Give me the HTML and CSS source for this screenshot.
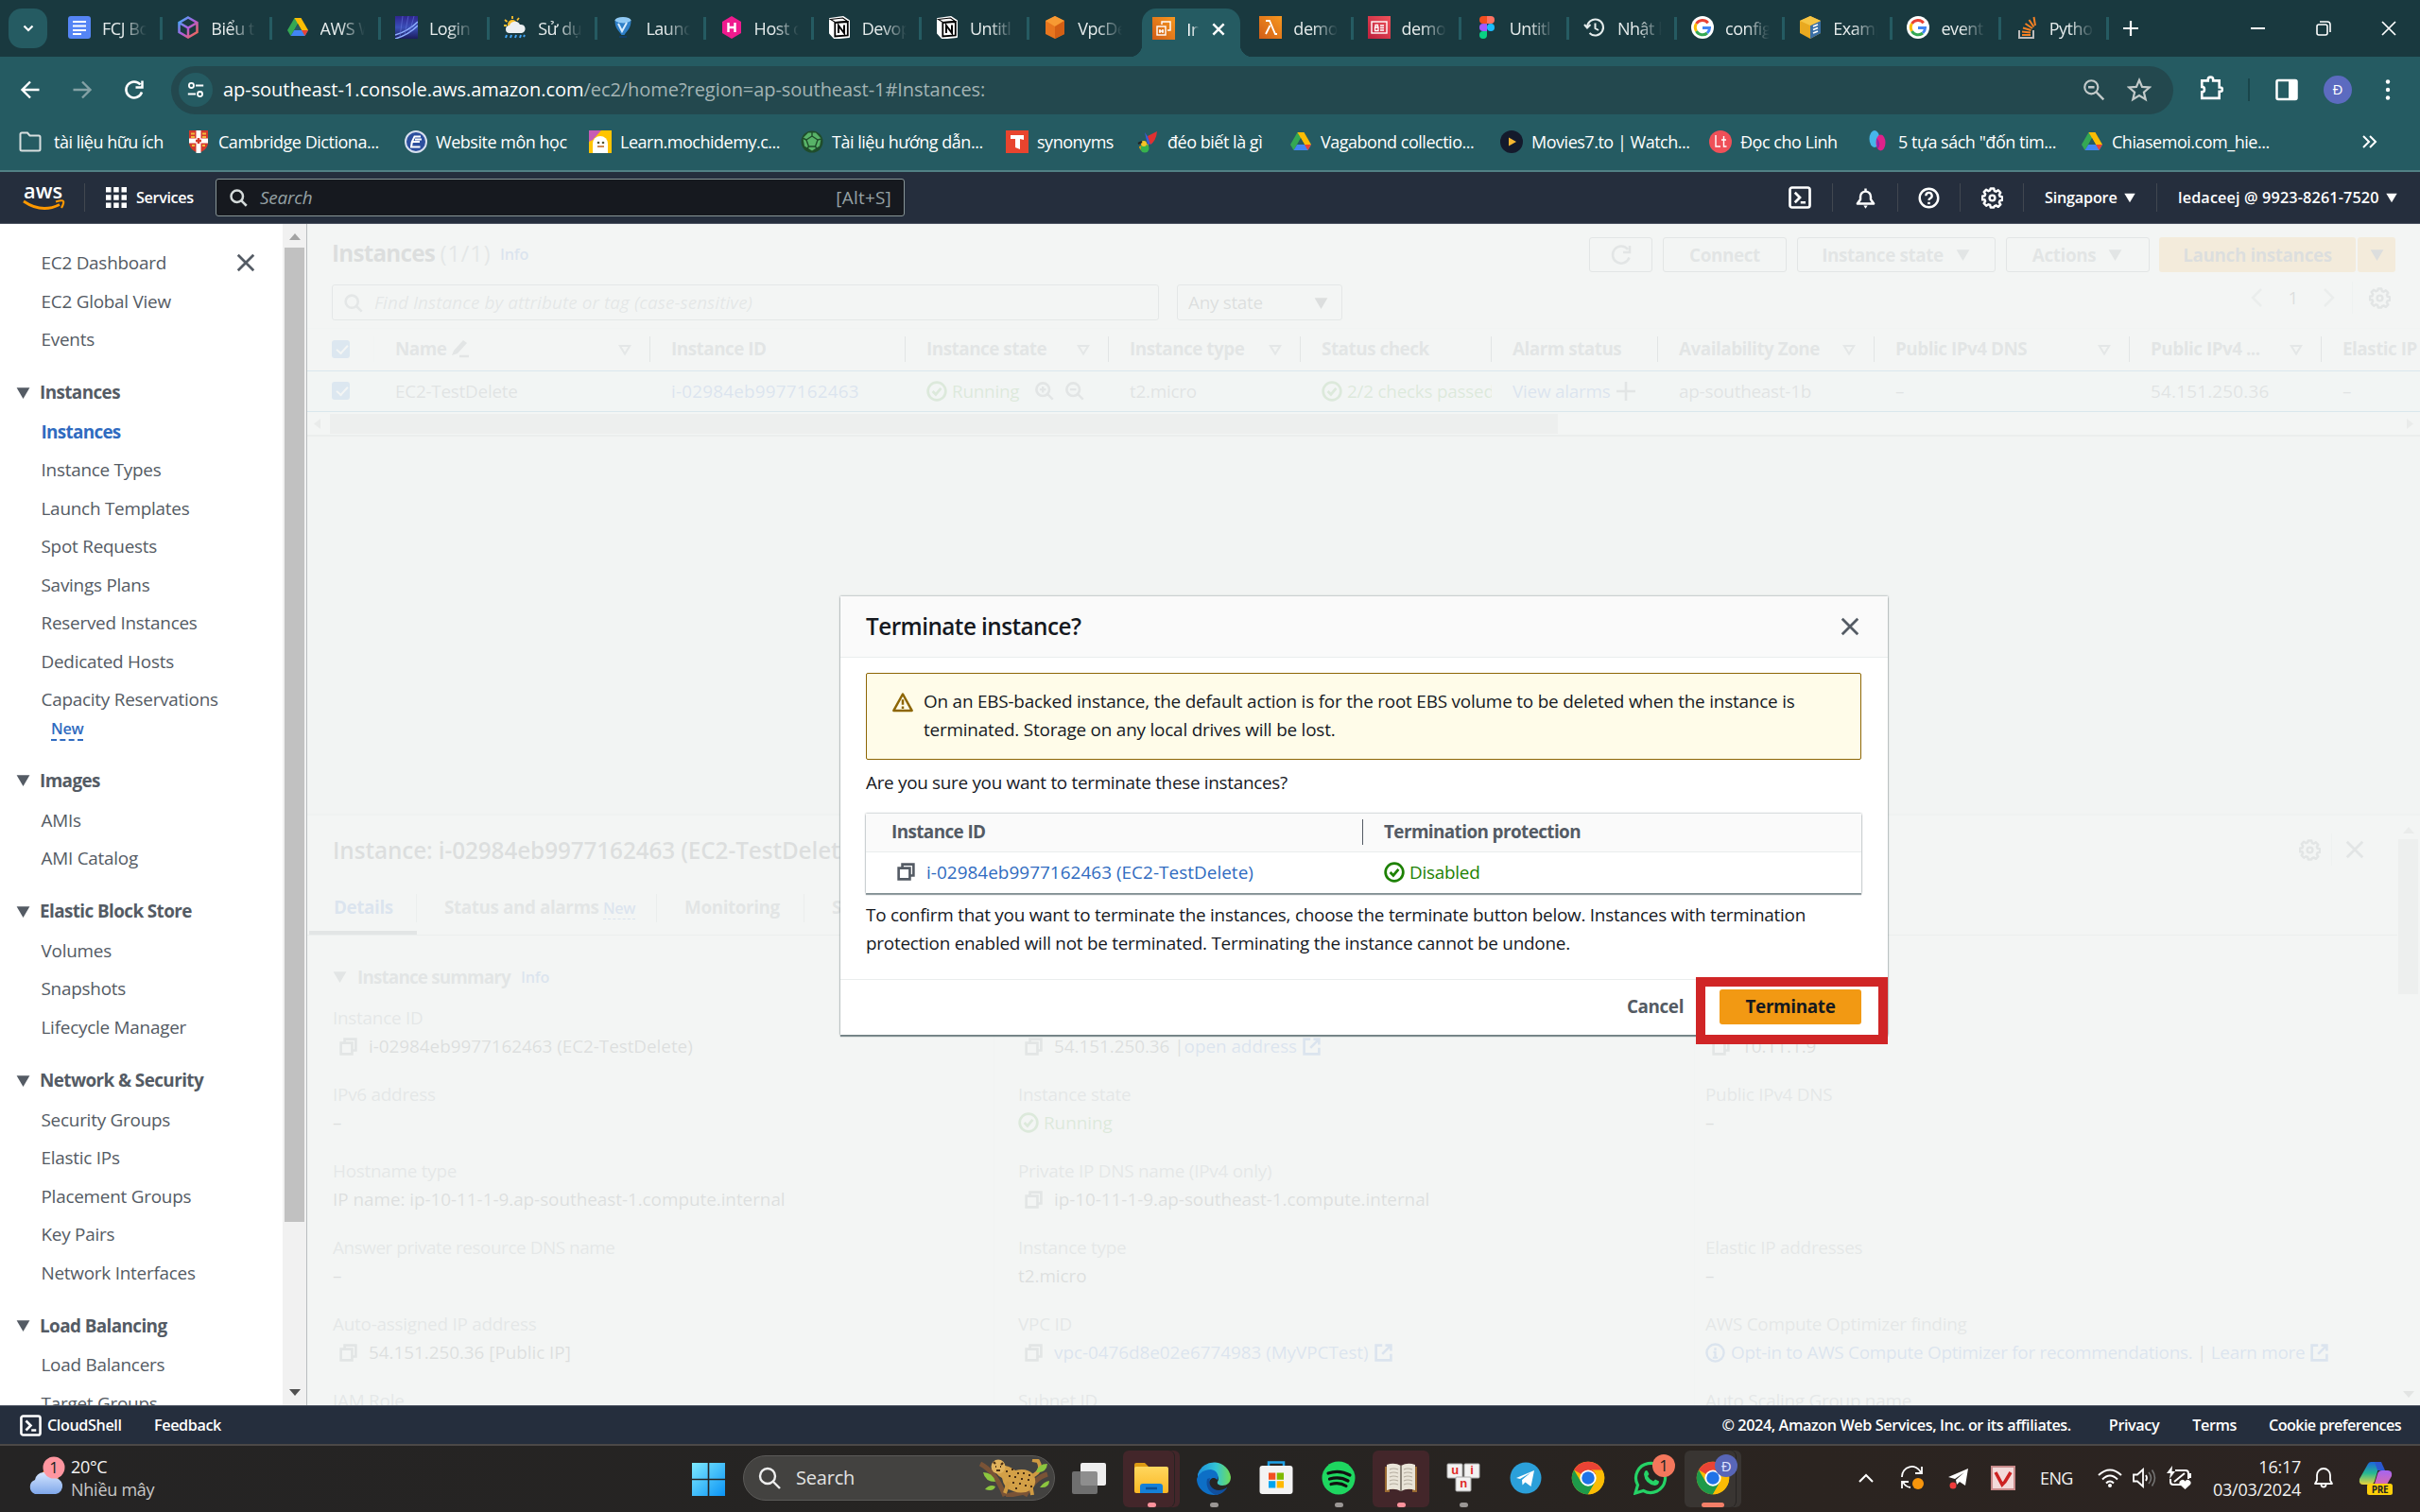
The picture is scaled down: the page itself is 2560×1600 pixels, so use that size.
FILE: index.html
```html
<!DOCTYPE html>
<html lang="en">
<head>
<meta charset="utf-8">
<title>Instances | EC2 | ap-southeast-1</title>
<link rel="stylesheet" href="styles.css">
</head>
<body>
<svg class="defs" width="0" height="0">
  <defs>
    <linearGradient id="g-orange" x1="0" y1="1" x2="1" y2="0"><stop offset="0" stop-color="#d05c17"/><stop offset="1" stop-color="#f7981f"/></linearGradient>
    <linearGradient id="g-red" x1="0" y1="1" x2="1" y2="0"><stop offset="0" stop-color="#bd1f3d"/><stop offset="1" stop-color="#f0525a"/></linearGradient>
    <linearGradient id="g-win" x1="0" y1="0" x2="1" y2="1"><stop offset="0" stop-color="#7eeaff"/><stop offset="1" stop-color="#0a93f5"/></linearGradient>
    <linearGradient id="g-edge" x1="0" y1="0" x2="1" y2="0"><stop offset="0" stop-color="#1c8fdc"/><stop offset=".55" stop-color="#32c3d6"/><stop offset="1" stop-color="#6fdc56"/></linearGradient>
    <linearGradient id="g-cube" x1="0" y1="0" x2="1" y2="1"><stop offset="0" stop-color="#38b6ff"/><stop offset=".5" stop-color="#b05bdc"/><stop offset="1" stop-color="#ff6a3c"/></linearGradient>
    <linearGradient id="g-folder" x1="0" y1="0" x2="0" y2="1"><stop offset="0" stop-color="#ffd75e"/><stop offset="1" stop-color="#fbb724"/></linearGradient>
    <linearGradient id="g-cloud" x1="0" y1="0" x2="0" y2="1"><stop offset="0" stop-color="#d5e6ff"/><stop offset="1" stop-color="#7fa7ea"/></linearGradient>
    <linearGradient id="g-login" x1="0" y1="0" x2="0" y2="1"><stop offset="0" stop-color="#2f2590"/><stop offset=".5" stop-color="#3a4fb8"/><stop offset="1" stop-color="#1b1d5e"/></linearGradient>
    <linearGradient id="g-cop1" x1="0" y1="0" x2="0" y2="1"><stop offset="0" stop-color="#1c66dd"/><stop offset=".5" stop-color="#25b892"/><stop offset="1" stop-color="#e9d43c"/></linearGradient>
    <linearGradient id="g-cop2" x1="0" y1="0" x2="0" y2="1"><stop offset="0" stop-color="#a664f0"/><stop offset="1" stop-color="#f5708a"/></linearGradient>
    <symbol id="i-x" viewBox="0 0 16 16"><path d="M2 2l12 12M14 2L2 14" fill="none" stroke="currentColor" stroke-width="2"/></symbol>
    <symbol id="i-down" viewBox="0 0 16 16"><path d="M1.5 3h13L8 14z" fill="currentColor"/></symbol>
    <symbol id="i-sort" viewBox="0 0 16 16"><path d="M2.8 4h10.4L8 12.5z" fill="none" stroke="currentColor" stroke-width="2"/></symbol>
    <symbol id="i-search" viewBox="0 0 16 16"><circle cx="7" cy="7" r="5" fill="none" stroke="currentColor" stroke-width="2"/><path d="M10.5 10.5L15 15" stroke="currentColor" stroke-width="2"/></symbol>
    <symbol id="i-zin" viewBox="0 0 16 16"><circle cx="7" cy="7" r="5.2" fill="none" stroke="currentColor" stroke-width="2"/><path d="M11 11l4 4M4.5 7h5M7 4.5v5" stroke="currentColor" stroke-width="1.8"/></symbol>
    <symbol id="i-zout" viewBox="0 0 16 16"><circle cx="7" cy="7" r="5.2" fill="none" stroke="currentColor" stroke-width="2"/><path d="M11 11l4 4M4.5 7h5" stroke="currentColor" stroke-width="1.8"/></symbol>
    <symbol id="i-copy" viewBox="0 0 16 16"><path d="M2 5h9v9H2z M5 5V2h9v9h-3" fill="none" stroke="currentColor" stroke-width="2"/></symbol>
    <symbol id="i-ok" viewBox="0 0 16 16"><circle cx="8" cy="8" r="6.8" fill="none" stroke="currentColor" stroke-width="2"/><path d="M4.8 8l2.4 2.5 4-4.8" fill="none" stroke="currentColor" stroke-width="2"/></symbol>
    <symbol id="i-ext" viewBox="0 0 16 16"><path d="M7 2H2v12h12V9M9.5 2H14v4.5M14 2L7 9" fill="none" stroke="currentColor" stroke-width="2"/></symbol>
    <symbol id="i-gear" viewBox="0 0 16 16"><path d="M6.8 1h2.4l.4 1.8 1.2.5 1.6-1 1.7 1.7-1 1.6.5 1.2 1.8.4v2.4l-1.8.4-.5 1.2 1 1.6-1.7 1.7-1.6-1-1.2.5L9.200 15H6.800l-.4-1.800-1.200-.5-1.600 1-1.700-1.700 1-1.600-.5-1.200L.600 9.200V6.800l1.800-.4.5-1.200-1-1.600 1.700-1.700 1.600 1 1.200-.5z" fill="none" stroke="currentColor" stroke-width="1.7" stroke-linejoin="round"/><circle cx="8" cy="8" r="2" fill="none" stroke="currentColor" stroke-width="1.7"/></symbol>
    <symbol id="i-shell" viewBox="0 0 16 16"><rect x="1" y="1" width="14" height="14" rx="1.500" fill="none" stroke="currentColor" stroke-width="1.800"/><path d="M4.500 4.500L8 8l-3.500 3.500M8.500 11.500h3.500" fill="none" stroke="currentColor" stroke-width="1.800"/></symbol>
    <symbol id="i-drive" viewBox="0 0 24 24"><path d="M8.500 2h7l-7.300 13L4.500 21 1 15z" fill="#34a853"/><path d="M8.500 2h7L23 15h-7z" fill="#fbbc04"/><path d="M4.500 21L8.200 15H23l-3.500 6z" fill="#4285f4"/><path d="M16 15h7l-3.500 6z" fill="#ea4335"/><path d="M12 8.200L8.200 15h7.700z" fill="#255b62"/></symbol>
    <symbol id="i-google" viewBox="0 0 24 24"><circle cx="12" cy="12" r="12" fill="#fff"/><path d="M17.800 7.200A7.600 7.600 0 0 0 5.500 8" fill="none" stroke="#ea4335" stroke-width="3"/><path d="M5.500 8a7.600 7.600 0 0 0 0 8" fill="none" stroke="#fbbc05" stroke-width="3"/><path d="M5.500 16a7.600 7.600 0 0 0 11.500 2" fill="none" stroke="#34a853" stroke-width="3"/><path d="M17 18a7.600 7.600 0 0 0 2.500-5.500H12" fill="none" stroke="#4285f4" stroke-width="3"/></symbol>
    <symbol id="i-notion" viewBox="0 0 24 24"><path d="M2 3l14-2 6 4v17l-15 1.500L2 18z" fill="#fff" stroke="#fff" stroke-width="2" stroke-linejoin="round"/><path d="M2.500 3.500l13-1.500 5 3.500-13 1z" fill="#fff" stroke="#000" stroke-width="1.200"/><path d="M7.300 7l13.500-1v14.500l-13.500 1z" fill="#fff" stroke="#000" stroke-width="1.800"/><path d="M11 18V10l6 8V9.500" fill="none" stroke="#000" stroke-width="2"/></symbol>
    <symbol id="i-chrome" viewBox="0 0 48 48"><circle cx="24" cy="24" r="23" fill="#fbbc04"/><path d="M24 24L4.100 12.500A23 23 0 0 1 43.900 12.500z" fill="#ea4335"/><path d="M43.900 12.500H24v11.500z" fill="#ea4335"/><path d="M4.100 12.500A23 23 0 0 0 24 47l10-17.300-20 0z" fill="#1e9a4a"/><path d="M43.900 12.500A23 23 0 0 1 24 47l10-17.300a11 11 0 0 0-10-17.200z" fill="#fbbc04"/><circle cx="24" cy="24" r="11.500" fill="#fff"/><circle cx="24" cy="24" r="9" fill="#1f73e8"/></symbol>
  </defs>
</svg>

<div class="screen">
  <header class="tabstrip">
    <button class="tabsearch"><svg width="14" height="14" viewBox="0 0 14 14"><path d="M2.500 4.500L7 9l4.500-4.500" fill="none" stroke="#fff" stroke-width="2.200"/></svg></button>
    <div class="tabs">
      <div class="tab wide"><svg viewBox="0 0 24 24"><rect width="24" height="24" rx="3" fill="#5585f5"/><path d="M5 6h14M5 10.500h14M5 15h14M5 19h9" stroke="#fff" stroke-width="2"/></svg><span>FCJ Bo</span></div>
      <div class="tab wide"><svg viewBox="0 0 24 24"><path d="M12 1.500L21.500 7v10L12 22.500 2.500 17V7zM2.500 7L12 12.500 21.500 7M12 12.500v10" fill="none" stroke="url(#g-cube)" stroke-width="2.500"/></svg><span>Biểu t</span></div>
      <div class="tab wide"><svg><use href="#i-drive"/></svg><span>AWS W</span></div>
      <div class="tab wide"><svg viewBox="0 0 24 24"><rect width="24" height="24" fill="url(#g-login)"/><path d="M0 20Q14 16 24 6M0 24Q14 20 24 10" stroke="#8fb0ff" stroke-width="1.500" fill="none"/><path d="M8 0L5 22M14 0l-4 20M20 0l-5 18" stroke="#6a7ae0" stroke-width=".8" opacity=".7"/></svg><span>Login</span></div>
      <div class="tab"><svg viewBox="0 0 24 24"><circle cx="9" cy="9" r="5" fill="#fbc02d"/><path d="M9 0v3M1 4l2.500 2M0 10h3M16 2l-2 2.500" stroke="#fbc02d" stroke-width="1.800"/><path d="M6 18a4 4 0 0 1 0-8 6 6 0 0 1 11-1 4.600 4.600 0 0 1 2 9z" fill="#eceff1"/><path d="M3 20l-1 3M8 20l-1 3M13 20l-1 3M18 20l-1 3M22 20l-1 2" stroke="#42a5f5" stroke-width="2"/></svg><span>Sử dụ</span></div>
      <div class="tab"><svg viewBox="0 0 24 24"><ellipse cx="12" cy="4.500" rx="8.500" ry="3.500" fill="#8fc9f5"/><path d="M3.500 5c0 8 4 10 7 15h3c3-5 7-7 7-15q-8 5-17 0z" fill="#2f80c9"/><path d="M7 8l4 8 5-9" stroke="#d6ecff" stroke-width="2" fill="none"/><path d="M8 22h8" stroke="#123d63" stroke-width="2"/></svg><span>Launc</span></div>
      <div class="tab"><svg viewBox="0 0 24 24"><path d="M12 0l10 6v12l-10 6L2 18V6z" fill="#ef1a8e"/><path d="M8.500 7v10M15.500 7v10M8.500 12h7" stroke="#fff" stroke-width="2.400"/></svg><span>Host c</span></div>
      <div class="tab"><svg><use href="#i-notion"/></svg><span>Devop</span></div>
      <div class="tab"><svg><use href="#i-notion"/></svg><span>Untitl</span></div>
      <div class="tab last"><svg viewBox="0 0 24 24"><path d="M12 0l10 5v14l-10 5-10-5V5z" fill="#e8761e"/><path d="M12 0l10 5-10 6L2 5z" fill="#f79a33"/><path d="M12 11l10-6v14l-10 5z" fill="#d45f14"/></svg><span>VpcDe</span></div>
      <div class="tab active"><svg viewBox="0 0 24 24"><rect width="24" height="24" fill="url(#g-orange)"/><rect x="5" y="10" width="9" height="9" fill="none" stroke="#fff" stroke-width="1.400"/><path d="M10 8V5h9v9h-3M8 13v4M11 13v4M7 15h5" fill="none" stroke="#fff" stroke-width="1.400"/></svg><span class="short">In</span><svg class="x" viewBox="0 0 16 16"><path d="M3 3l10 10M13 3L3 13" stroke="#fff" stroke-width="2.200"/></svg></div>
      <div class="tab"><svg viewBox="0 0 24 24"><rect width="24" height="24" fill="url(#g-orange)"/><path d="M7 5h4l6 14h2M11.500 10L7 19" fill="none" stroke="#fff" stroke-width="1.800"/></svg><span>demo</span></div>
      <div class="tab"><svg viewBox="0 0 24 24"><rect width="24" height="24" fill="url(#g-red)"/><rect x="4" y="6" width="16" height="12" fill="none" stroke="#fff" stroke-width="1.400"/><path d="M7.500 12v3.500h3.500V12zM8 12V9.500h2.500V12M13 10h4M13 12.500h4M13 15h4" fill="none" stroke="#fff" stroke-width="1.300"/></svg><span>demo</span></div>
      <div class="tab"><svg viewBox="0 0 24 24"><path d="M12 0H8a4 4 0 0 0 0 8h4z" fill="#f24e1e"/><path d="M12 0h4a4 4 0 0 1 0 8h-4z" fill="#ff7262"/><path d="M12 8H8a4 4 0 0 0 0 8h4z" fill="#a259ff"/><circle cx="16" cy="12" r="4" fill="#1abcfe"/><path d="M12 16H8a4 4 0 1 0 4 4z" fill="#0acf83"/></svg><span>Untitl</span></div>
      <div class="tab"><svg viewBox="0 0 24 24"><path d="M4 12a8.500 8.500 0 1 1 2.500 6M1 9l3 3.500L7.500 9M12.500 7.500V13l3.500 2" fill="none" stroke="#e6eded" stroke-width="2"/></svg><span>Nhật k</span></div>
      <div class="tab"><svg><use href="#i-google"/></svg><span>config</span></div>
      <div class="tab"><svg viewBox="0 0 24 24"><path d="M12 0l11 5v13l-11 6L1 18V5z" fill="#e9a920"/><path d="M12 10l11-5v13l-11 6z" fill="#3a6fa5"/><path d="M12 0l11 5-11 5L1 5z" fill="#f6c544"/><path d="M15 11l5-2M15 14.500l5-2M15 18l5-2" stroke="#fff" stroke-width="1.800"/></svg><span>Examp</span></div>
      <div class="tab"><svg><use href="#i-google"/></svg><span>event</span></div>
      <div class="tab"><svg viewBox="0 0 24 24"><path d="M4 15v8h15v-8" fill="none" stroke="#bcbbbb" stroke-width="2"/><path d="M7 20h9M7 16.500l9 1M8 12.500l8.500 2.500M10.500 8l7.500 5M14.500 4l5 7.500M19.500 1l1.500 9" stroke="#f48024" stroke-width="2"/></svg><span>Pytho</span></div>
      <svg class="newtab" width="18" height="18" viewBox="0 0 18 18"><path d="M9 1v16M1 9h16" stroke="#fff" stroke-width="2.200"/></svg>
    </div>
    <div class="wincontrols">
      <svg width="16" height="16" viewBox="0 0 16 16"><path d="M0 8h15" stroke="#fff" stroke-width="2"/></svg>
      <svg width="16" height="16" viewBox="0 0 16 16"><rect x="1" y="4" width="11" height="11" rx="2" fill="none" stroke="#fff" stroke-width="1.600"/><path d="M4 1h8a3 3 0 0 1 3 3v8" fill="none" stroke="#fff" stroke-width="1.600"/></svg>
      <svg width="16" height="16" viewBox="0 0 16 16"><path d="M1 1l14 14M15 1L1 15" stroke="#fff" stroke-width="1.700"/></svg>
    </div>
  </header>

  <div class="toolbar">
    <svg class="tb" viewBox="0 0 24 24"><path d="M21.500 12H4M12 3.500L3.500 12l8.500 8.500" fill="none" stroke="#fff" stroke-width="2.400"/></svg>
    <svg class="tb" viewBox="0 0 24 24"><path d="M2.500 12H20M12 3.500l8.500 8.500-8.500 8.500" fill="none" stroke="#84a1a5" stroke-width="2.400"/></svg>
    <svg class="tb" viewBox="0 0 24 24"><path d="M20 14.500A8.500 8.500 0 1 1 18.500 6.500M20.500 2.500v7h-7" fill="none" stroke="#fff" stroke-width="2.500"/></svg>
    <div class="omnibox">
      <div class="siteinfo"><svg width="20" height="20" viewBox="0 0 22 22"><circle cx="6" cy="6" r="2.800" fill="none" stroke="#fff" stroke-width="2"/><path d="M11 6h9M2 16h9" stroke="#fff" stroke-width="2.200"/><circle cx="16" cy="16" r="2.800" fill="none" stroke="#fff" stroke-width="2"/></svg></div>
      <div class="url">ap-southeast-1.console.aws.amazon.com<span>/ec2/home?region=ap-southeast-1#Instances:</span></div>
      <svg class="ob" viewBox="0 0 24 24"><circle cx="9.500" cy="9.500" r="6.500" fill="none" stroke="#c3caca" stroke-width="2"/><path d="M14.500 14.500l7 7M6.500 9.500h6" stroke="#c3caca" stroke-width="2.200"/></svg>
      <svg class="ob" viewBox="0 0 24 24"><path d="M12 2.500l2.800 6.600 7.200.6-5.500 4.700 1.700 7-6.200-3.800-6.200 3.800 1.700-7L2 9.700l7.200-.6z" fill="none" stroke="#c3caca" stroke-width="2"/></svg>
    </div>
    <svg class="tb puzzle" viewBox="0 0 24 24"><path d="M3 5h6V4a2.500 2.500 0 0 1 5 0v1h6v6.500h1a2 2 0 0 1 0 4h-1V22H3v-6a2.500 2.500 0 0 0 0-5z" fill="none" stroke="#fff" stroke-width="2.400"/></svg>
    <i class="tbsep"></i>
    <svg class="tb panel" viewBox="0 0 24 24"><rect x="1.500" y="2" width="21" height="20" rx="1.500" fill="none" stroke="#fff" stroke-width="2.500"/><path d="M14 2h8v20h-8z" fill="#fff"/></svg>
    <div class="avatar">Đ</div>
    <svg class="tb menu" viewBox="0 0 24 24"><circle cx="12" cy="3.500" r="2.200" fill="#fff"/><circle cx="12" cy="12" r="2.200" fill="#fff"/><circle cx="12" cy="20.500" r="2.200" fill="#fff"/></svg>
  </div>

  <nav class="bookmarks">
    <a class="bm1"><svg viewBox="0 0 24 24"><path d="M1.500 20V4a1.500 1.500 0 0 1 1.500-1.500h6l2.500 3H21A1.500 1.500 0 0 1 22.500 7v13a1.500 1.500 0 0 1-1.500 1.500H3A1.500 1.500 0 0 1 1.500 20z" fill="none" stroke="#d8dfdf" stroke-width="2"/></svg>tài liệu hữu ích</a>
    <a class="bm2"><svg viewBox="0 0 24 24"><path d="M2 0h20v14q-1 7-10 10Q3 21 2 14z" fill="#d33a2c"/><path d="M12 0v24M2 11h20" stroke="#fff" stroke-width="5"/><path d="M12 8v6M9 11h6" stroke="#d33a2c" stroke-width="2.500"/><path d="M4 3.500h4M16 3.500h4M4 7h4M16 7h4M5 16h3M16 16h3" stroke="#f2b93b" stroke-width="2"/></svg>Cambridge Dictiona...</a>
    <a class="bm3"><svg viewBox="0 0 24 24"><circle cx="12" cy="12" r="11" fill="#2c4f9e" stroke="#d7dfee" stroke-width="2"/><path d="M17 6.500H10.500Q7 12 7 17.500H16.500M8.500 12H16M11 9.500h7" stroke="#fff" stroke-width="2" fill="none"/></svg>Website môn học</a>
    <a class="bm4"><svg viewBox="0 0 24 24"><rect width="24" height="24" fill="#ffc400"/><path d="M0 0h13L4 10 0 12z" fill="#c75bb5"/><path d="M4 24V14a7.500 7.500 0 0 1 16 0v10z" fill="#fff"/><circle cx="10" cy="13" r="1.300" fill="#553"/><circle cx="15" cy="13" r="1.300" fill="#553"/><path d="M9 17h7" stroke="#c85" stroke-width="2"/></svg>Learn.mochidemy.c...</a>
    <a class="bm5"><svg viewBox="0 0 24 24"><circle cx="12" cy="12" r="11.500" fill="#1f4d2b"/><path d="M8 2.500h8l5.500 6-1.500 8-8 5-8-5L2.500 8z" fill="#58b368"/><path d="M12 6l6 4-2.500 7h-7L6 10zM12 6V2M18 10l4-1M15.500 17l2 3M8.500 17l-2 3M6 10L2 8" fill="none" stroke="#1f4d2b" stroke-width="1.400"/></svg>Tài liệu hướng dẫn...</a>
    <a class="bm6"><svg viewBox="0 0 24 24"><rect width="24" height="24" fill="#e8442e"/><path d="M5 5h14v5l-4-1v11l-5-2V9H5z" fill="#fff"/></svg>synonyms</a>
    <a class="bm7"><svg viewBox="0 0 24 24"><path d="M9 2l8 12-5 1z" fill="#3b5bdb"/><path d="M22 1q-1 10-7 14l-3-9z" fill="#e03131"/><path d="M12 14a5 5 0 1 1-9 3z" fill="#f59f00"/><circle cx="9" cy="19" r="4.500" fill="#37b24d"/><circle cx="8" cy="14" r="3" fill="#f7c325"/><path d="M2 14l4-2" stroke="#222" stroke-width="2"/></svg>đéo biết là gì</a>
    <a class="bm8"><svg><use href="#i-drive"/></svg>Vagabond collectio...</a>
    <a class="bm9"><svg viewBox="0 0 24 24"><circle cx="12" cy="12" r="12" fill="#141a2c"/><path d="M9 7.500l8 4.500-8 4.500z" fill="#f7b731"/></svg>Movies7.to | Watch...</a>
    <a class="bm10"><svg viewBox="0 0 24 24"><circle cx="12" cy="12" r="12" fill="#ef5058"/><path d="M7 5v12h5M15.500 6v11h3M13 10h5" fill="none" stroke="#fff" stroke-width="1.400"/></svg>Đọc cho Linh</a>
    <a class="bm11"><svg viewBox="0 0 24 24"><ellipse cx="8" cy="9" rx="5.500" ry="9" fill="#46b5ea"/><ellipse cx="14.500" cy="13" rx="5" ry="8.500" fill="#e0218a"/><path d="M10 8q6 6 1 12" fill="#8e24aa"/></svg>5 tựa sách "đốn tim...</a>
    <a><svg><use href="#i-drive"/></svg>Chiasemoi.com_hie...</a>
    <svg class="more" viewBox="0 0 18 18"><path d="M2 3l6 6-6 6M9 3l6 6-6 6" fill="none" stroke="#fff" stroke-width="2"/></svg>
  </nav>

  <div class="awsnav">
    <svg class="logo" width="46" height="30" viewBox="0 0 46 30"><text x="1" y="16" class="awsword" textLength="41" lengthAdjust="spacingAndGlyphs">aws</text><path d="M1 19q19 13 38 3.500" fill="none" stroke="#f90" stroke-width="2.800"/><path d="M35 19.500q7-2 8-.5t-2 7" fill="none" stroke="#f90" stroke-width="2.200"/></svg>
    <i class="navsep"></i>
    <svg class="grid" width="24" height="24" viewBox="0 0 24 24"><path d="M1 1h5.500v5.500H1zM9.200 1h5.500v5.500H9.200zM17.500 1H23v5.500h-5.500zM1 9.200h5.500v5.500H1zM9.200 9.200h5.500v5.500H9.200zM17.500 9.200H23v5.500h-5.500zM1 17.500h5.500V23H1zM9.200 17.500h5.500V23H9.200zM17.500 17.500H23V23h-5.500z" fill="#fff"/></svg>
    <b class="services">Services</b>
    <div class="navsearch"><svg width="20" height="20"><use href="#i-search"/></svg><em>Search</em><span>[Alt+S]</span></div>
    <div class="navright">
      <div><svg width="24" height="24"><use href="#i-shell"/></svg></div>
      <div><svg width="23" height="23" viewBox="0 0 16 16"><path d="M8 1v2M2 12.200L4.200 9V7a3.800 3.800 0 0 1 7.600 0v2l2.200 3.200z" fill="none" stroke="#fff" stroke-width="1.700" stroke-linejoin="round"/><path d="M6.500 13.500h3L8 15.800z" fill="#fff"/></svg></div>
      <div><svg width="23" height="23" viewBox="0 0 16 16"><circle cx="8" cy="8" r="6.800" fill="none" stroke="#fff" stroke-width="1.700"/><path d="M5.800 6.400a2.200 2.200 0 1 1 2.900 2q-.7.300-.7 1.400" fill="none" stroke="#fff" stroke-width="1.600"/><path d="M7.100 11h1.800v1.600H7.100z" fill="#fff"/></svg></div>
      <div><svg width="23" height="23"><use href="#i-gear"/></svg></div>
      <div class="drop"><b>Singapore</b><svg width="14" height="14"><use href="#i-down"/></svg></div>
      <div class="drop"><b class="acct">ledaceej @ 9923-8261-7520</b><svg width="14" height="14"><use href="#i-down"/></svg></div>
    </div>
  </div>

  <div class="body">
    <aside class="sidebar">
      <div class="sidenav">
        <div class="it row">EC2 Dashboard<svg width="22" height="22"><use href="#i-x"/></svg></div>
        <div class="it">EC2 Global View</div>
        <div class="it">Events</div>
        <div class="hd"><svg><use href="#i-down"/></svg>Instances</div>
        <div class="it sel">Instances</div>
        <div class="it">Instance Types</div>
        <div class="it">Launch Templates</div>
        <div class="it">Spot Requests</div>
        <div class="it">Savings Plans</div>
        <div class="it">Reserved Instances</div>
        <div class="it">Dedicated Hosts</div>
        <div class="it">Capacity Reservations</div>
        <div class="new"><span>New</span></div>
        <div class="hd"><svg><use href="#i-down"/></svg>Images</div>
        <div class="it">AMIs</div>
        <div class="it">AMI Catalog</div>
        <div class="hd"><svg><use href="#i-down"/></svg>Elastic Block Store</div>
        <div class="it">Volumes</div>
        <div class="it">Snapshots</div>
        <div class="it">Lifecycle Manager</div>
        <div class="hd"><svg><use href="#i-down"/></svg>Network &amp; Security</div>
        <div class="it">Security Groups</div>
        <div class="it">Elastic IPs</div>
        <div class="it">Placement Groups</div>
        <div class="it">Key Pairs</div>
        <div class="it">Network Interfaces</div>
        <div class="hd"><svg><use href="#i-down"/></svg>Load Balancing</div>
        <div class="it">Load Balancers</div>
        <div class="it">Target Groups</div>
      </div>
      <div class="sbar"><svg viewBox="0 0 12 8"><path d="M0 8l6-7 6 7z" fill="#a3a3a3"/></svg><i></i><svg viewBox="0 0 12 8"><path d="M0 0l6 7 6-7z" fill="#505050"/></svg></div>
    </aside>

    <main class="main">
      <section class="list">
        <div class="titlebar">
          <h1>Instances <span>(1/1)</span></h1><a class="info">Info</a>
          <div class="actions">
            <button class="btn refresh"><svg width="24" height="24" viewBox="0 0 24 24"><path d="M20.500 14.500A9 9 0 1 1 19 6M21 2v7h-7" fill="none" stroke="currentColor" stroke-width="2.500"/></svg></button>
            <button class="btn w131">Connect</button>
            <button class="btn w210">Instance state<svg><use href="#i-down"/></svg></button>
            <button class="btn w152">Actions<svg><use href="#i-down"/></svg></button>
            <button class="btn launch">Launch instances</button>
            <button class="btn launchdd"><svg><use href="#i-down"/></svg></button>
          </div>
        </div>
        <div class="filterbar">
          <div class="find"><svg width="21" height="21"><use href="#i-search"/></svg><em>Find Instance by attribute or tag (case-sensitive)</em></div>
          <div class="state">Any state<svg><use href="#i-down"/></svg></div>
          <div class="pager">
            <svg class="dim" width="14" height="20" viewBox="0 0 14 20"><path d="M12 1L3 10l9 9" fill="none" stroke="currentColor" stroke-width="2.500"/></svg>
            <b>1</b>
            <svg class="dim" width="14" height="20" viewBox="0 0 14 20"><path d="M2 1l9 9-9 9" fill="none" stroke="currentColor" stroke-width="2.500"/></svg>
            <i></i>
            <svg width="23" height="23"><use href="#i-gear"/></svg>
          </div>
        </div>
        <div class="trow thead">
          <div class="cb"><span class="check"></span></div>
          <div>Name <svg class="pen" width="20" height="20" viewBox="0 0 20 20"><path d="M1 17l2-5L13 1l4 3L7 15z" fill="currentColor"/><path d="M9 18h10" stroke="currentColor" stroke-width="2.500"/></svg><svg class="sort"><use href="#i-sort"/></svg></div>
          <div>Instance ID</div>
          <div>Instance state<svg class="sort"><use href="#i-sort"/></svg></div>
          <div>Instance type<svg class="sort"><use href="#i-sort"/></svg></div>
          <div>Status check</div>
          <div>Alarm status</div>
          <div>Availability Zone<svg class="sort"><use href="#i-sort"/></svg></div>
          <div>Public IPv4 DNS<svg class="sort"><use href="#i-sort"/></svg></div>
          <div>Public IPv4 ...<svg class="sort"><use href="#i-sort"/></svg></div>
          <div>Elastic IP</div>
        </div>
        <div class="trow tbody">
          <div class="cb"><span class="check"></span></div>
          <div>EC2-TestDelete</div>
          <div class="lnk num">i-02984eb9977162463</div>
          <div><span class="ok"><svg><use href="#i-ok"/></svg>Running</span><svg class="z1"><use href="#i-zin"/></svg><svg class="z2"><use href="#i-zout"/></svg></div>
          <div>t2.micro</div>
          <div class="clip"><span class="ok"><svg><use href="#i-ok"/></svg>2/2 checks passed</span></div>
          <div><span class="lnk">View alarms</span><svg class="plus" width="20" height="20" viewBox="0 0 20 20"><path d="M10 0v20M0 10h20" stroke="currentColor" stroke-width="2.600"/></svg></div>
          <div>ap-southeast-1b</div>
          <div>–</div>
          <div class="num">54.151.250.36</div>
          <div>–</div>
        </div>
        <div class="hscroll"><svg width="7" height="11" viewBox="0 0 7 11"><path d="M7 0v11L0 5.500z" fill="currentColor"/></svg><i></i><svg class="r" width="7" height="11" viewBox="0 0 7 11"><path d="M0 0v11l7-5.500z" fill="currentColor"/></svg></div>
      </section>

      <section class="split">
        <div class="splitmain">
          <div class="splithead"><h2>Instance: i-02984eb9977162463 (EC2-TestDelete)</h2><svg width="23" height="23"><use href="#i-gear"/></svg><i></i><svg width="22" height="22"><use href="#i-x"/></svg></div>
          <div class="dtabs"><span class="on">Details</span><span>Status and alarms <small>New</small></span><span>Monitoring</span><span>Security</span></div>
          <div class="sumhead"><svg width="17" height="17"><use href="#i-down"/></svg><b>Instance summary</b><a class="info">Info</a></div>
          <div class="fields">
            <dl><dt>Instance ID</dt><dd class="cp"><svg><use href="#i-copy"/></svg>i-02984eb9977162463 (EC2-TestDelete)</dd></dl>
            <dl><dt></dt><dd class="cp"><svg><use href="#i-copy"/></svg>54.151.250.36 |<span class="lnk">open address</span><svg class="ext"><use href="#i-ext"/></svg></dd></dl>
            <dl><dt></dt><dd class="cp"><svg><use href="#i-copy"/></svg>10.11.1.9</dd></dl>
            <dl><dt>IPv6 address</dt><dd>–</dd></dl>
            <dl><dt>Instance state</dt><dd class="ok"><svg><use href="#i-ok"/></svg>Running</dd></dl>
            <dl><dt>Public IPv4 DNS</dt><dd>–</dd></dl>
            <dl><dt>Hostname type</dt><dd>IP name: ip-10-11-1-9.ap-southeast-1.compute.internal</dd></dl>
            <dl><dt>Private IP DNS name (IPv4 only)</dt><dd class="cp"><svg><use href="#i-copy"/></svg>ip-10-11-1-9.ap-southeast-1.compute.internal</dd></dl>
            <dl></dl>
            <dl><dt class="tight">Answer private resource DNS name</dt><dd>–</dd></dl>
            <dl><dt>Instance type</dt><dd>t2.micro</dd></dl>
            <dl><dt>Elastic IP addresses</dt><dd>–</dd></dl>
            <dl><dt>Auto-assigned IP address</dt><dd class="cp"><svg><use href="#i-copy"/></svg>54.151.250.36 [Public IP]</dd></dl>
            <dl><dt>VPC ID</dt><dd class="cp lnk"><svg class="gray"><use href="#i-copy"/></svg>vpc-0476d8e02e6774983 (MyVPCTest)<svg class="ext"><use href="#i-ext"/></svg></dd></dl>
            <dl><dt>AWS Compute Optimizer finding</dt><dd class="lnk opt"><svg viewBox="0 0 16 16"><circle cx="8" cy="8" r="6.900" fill="none" stroke="currentColor" stroke-width="1.800"/><path d="M8 4v2M6.500 7.500H8V12M6 12h4" fill="none" stroke="currentColor" stroke-width="1.700"/></svg>Opt-in to AWS Compute Optimizer for recommendations. <u>|</u> Learn more<svg class="ext"><use href="#i-ext"/></svg></dd></dl>
            <dl><dt>IAM Role</dt></dl>
            <dl><dt>Subnet ID</dt></dl>
            <dl><dt>Auto Scaling Group name</dt></dl>
          </div>
        </div>
        <div class="sbar small"><svg viewBox="0 0 12 8"><path d="M0 8l6-7 6 7z" fill="#a3a3a3"/></svg><i></i><svg viewBox="0 0 12 8"><path d="M0 0l6 7 6-7z" fill="#505050"/></svg></div>
      </section>
      <div class="overlay"></div>
    </main>

    <div class="modal">
      <div class="mhead"><h3>Terminate instance?</h3><svg width="22" height="22"><use href="#i-x"/></svg></div>
      <div class="mbody">
        <div class="alert"><svg width="22" height="22" viewBox="0 0 16 16"><path d="M8 1.800L15 14.500H1z" fill="none" stroke="currentColor" stroke-width="1.800" stroke-linejoin="round"/><path d="M8 6v4M8 11.300V13" stroke="currentColor" stroke-width="1.800"/></svg><p>On an EBS-backed instance, the default action is for the root EBS volume to be deleted when the instance is<br>terminated. Storage on any local drives will be lost.</p></div>
        <p class="ask">Are you sure you want to terminate these instances?</p>
        <div class="mtable">
          <div class="mth"><b>Instance ID</b><b>Termination protection</b></div>
          <div class="mtr"><span><svg><use href="#i-copy"/></svg><a>i-02984eb9977162463 (EC2-TestDelete)</a></span><span class="ok"><svg><use href="#i-ok"/></svg>Disabled</span></div>
        </div>
        <p class="confirm">To confirm that you want to terminate the instances, choose the terminate button below. Instances with termination<br>protection enabled will not be terminated. Terminating the instance cannot be undone.</p>
      </div>
      <div class="mfoot"><b>Cancel</b><button>Terminate</button></div>
      <div class="redbox"></div>
    </div>
  </div>

  <footer class="awsfoot">
    <svg width="23" height="23"><use href="#i-shell"/></svg><b class="cs">CloudShell</b><b>Feedback</b>
    <span class="grow"></span><b class="cpy">© 2024, Amazon Web Services, Inc. or its affiliates.</b><b class="prv">Privacy</b><b class="trm">Terms</b><b class="ck">Cookie preferences</b>
  </footer>

  <div class="taskbar">
    <div class="weather">
      <svg width="46" height="46" viewBox="0 0 46 46"><circle cx="25" cy="21" r="9" fill="#f58a1f"/><path d="M9 40a8 8 0 0 1 0-15 10 10 0 0 1 19-2 8.500 8.500 0 0 1 3 17z" fill="url(#g-cloud)"/><circle cx="29" cy="12" r="11.500" fill="#ff96a0"/><text x="29" y="18" text-anchor="middle" class="bdg">1</text></svg>
      <div><span>20°C</span><span class="sub">Nhiều mây</span></div>
    </div>
    <svg class="win" width="35" height="35" viewBox="0 0 35 35"><path d="M0 0h16.700v16.700H0zM18.300 0H35v16.700H18.300zM0 18.300h16.700V35H0zM18.300 18.300H35V35H18.300z" fill="url(#g-win)"/></svg>
    <div class="tsearch"><svg width="26" height="26" viewBox="0 0 26 26"><circle cx="11" cy="11" r="8" fill="none" stroke="#eee" stroke-width="2.400"/><path d="M17 17l7 7" stroke="#eee" stroke-width="2.400"/></svg><span>Search</span>
      <svg class="cat" width="78" height="40" viewBox="0 0 78 40"><path d="M3 5q16 8 26 34M74 16Q60 20 50 39M30 39l20-4" fill="none" stroke="#7a5336" stroke-width="5"/><path d="M18 8q12-4 22 4 12-3 19 4 5 8-1 16-10 6-20 2-10-2-12-14-8-4-8-12z" fill="#d3a047"/><circle cx="22" cy="8" r="7.500" fill="#e0b25c"/><path d="M58 18Q70 12 64 2l-6-1M33 24l-4 12M56 26l2 12" stroke="#cf9a42" stroke-width="4" fill="none"/><path d="M17 3l2 2M27 4l-2 2M19 8h1M24 8h1M20 12h4M30 13h2M36 11h2M42 15h2M48 15h2M54 17h2M33 18h2M39 19h2M46 21h2M53 22h2M37 25h2M44 26h2M50 28h2M40 31h2M56 29h2" stroke="#4a2f14" stroke-width="2.200"/><path d="M6 14q10 0 13 10-11 0-13-10zM62 14q2-9 12-9-1 10-12 9zM66 30q4-6 10-7 0 8-10 7zM8 32q5-6 11-3-2 6-11 3z" fill="#8cc63f"/></svg>
    </div>
    <div class="apps">
      <div class="app"><svg viewBox="0 0 36 36"><rect x="9" y="2" width="27" height="24" rx="2" fill="#eee"/><rect x="0" y="11" width="27" height="24" rx="2" fill="#7c7c7c" opacity=".85"/></svg></div>
      <div class="app hot run multi"><svg viewBox="0 0 36 36"><path d="M0 4a2 2 0 0 1 2-2h9l4 4-3 6H0z" fill="#dd9a13"/><rect y="6" width="36" height="28" rx="2" fill="url(#g-folder)"/><path d="M6 34V27a3 3 0 0 1 3-3h18a3 3 0 0 1 3 3v7z" fill="#1580d8"/><path d="M12 29h12" stroke="#0d5096" stroke-width="2.500"/></svg></div>
      <div class="app run"><svg viewBox="0 0 36 36"><path d="M1 14A18 18 0 0 1 36 17c0 6-4 9-9 9-4 0-6-2-5-4 3-5-1-9-7-9-7 0-12 4-14 8z" fill="url(#g-edge)"/><path d="M0 19C2 12 9 9 15 9c6 1 9 6 7 11-6-6-12 2-7 9 4 4 11 5 17-1-3 5-8 8-14 8C8 36 0 28 0 19z" fill="#0d6fc6"/><path d="M11 19c-2 8 2 14 9 17 6-1 10-4 12-8-6 4-13 4-17-1-2-3-2-6-1-9z" fill="#104f9e"/></svg></div>
      <div class="app"><svg viewBox="0 0 36 36"><path d="M10 6V1.500h16V6" fill="none" stroke="#1fa2e8" stroke-width="2.500"/><rect x=".5" y="5" width="35" height="30" rx="3" fill="#f3f3f3"/><path d="M10 12.500h7.300v7.300H10z" fill="#f25022"/><path d="M18.700 12.500H26v7.300h-7.300z" fill="#7fba00"/><path d="M10 21.200h7.300v7.300H10z" fill="#00a4ef"/><path d="M18.700 21.200H26v7.300h-7.300z" fill="#ffb900"/></svg></div>
      <div class="app run"><svg viewBox="0 0 36 36"><circle cx="18" cy="18" r="17.500" fill="#1ed760"/><path d="M7 13q12-4 23 2M8.500 19q11-3 19.500 2M10 24.500q9-2.500 16 2" fill="none" stroke="#111" stroke-width="3.200" stroke-linecap="round"/></svg></div>
      <div class="app hot run"><svg viewBox="0 0 36 36"><path d="M1 33V6h34v27h-5v-3H6v3z" fill="#9a6a32"/><path d="M3 4q8-3 15 1v27q-7-4-15-1zM33 4q-8-3-15 1v27q7-4 15-1z" fill="#e9e4d8"/><path d="M18 5v27" stroke="#8a8378" stroke-width="2"/><path d="M6 9q4-2 9 0M6 13q4-2 9 0M6 17q4-2 9 0M6 21q4-2 9 0M6 25q4-2 9 0M21 9q4-2 9 0M21 13q4-2 9 0M21 17q4-2 9 0M21 21q4-2 9 0M21 25q4-2 9 0" stroke="#b5aea0" stroke-width="1.200" fill="none"/></svg></div>
      <div class="app run"><svg viewBox="0 0 36 36"><rect x="1" y="3" width="16" height="15" rx="1" fill="#f2f2f2" stroke="#aaa"/><rect x="19" y="3" width="16" height="15" rx="1" fill="#f2f2f2" stroke="#aaa"/><rect x="10" y="17" width="16" height="15" rx="1" fill="#f2f2f2" stroke="#aaa"/><text x="9" y="14" class="key">u</text><text x="27" y="14" class="key">i</text><text x="18" y="28" class="key">n</text></svg></div>
      <div class="app"><svg viewBox="0 0 36 36"><circle cx="18" cy="18" r="16.500" fill="#2ba0da"/><path d="M8 18l19-8-3.500 17-6-4.500-3 3-.5-5.500 9-7.500-11 6.500z" fill="#fff"/></svg></div>
      <div class="app"><svg><use href="#i-chrome"/></svg></div>
      <div class="app"><svg viewBox="0 0 36 36"><path d="M2 34l2.500-8.500A15.500 15.500 0 1 1 10.500 31.500z" fill="none" stroke="#25d366" stroke-width="3.200"/><path d="M12 11q2-2 3 0l1.500 3-1.500 2q2 4 6 5.500l2-2 4 2q0 4-4.500 4.500Q12 24 11 14z" fill="#25d366"/></svg><em class="badge">1</em></div>
      <div class="app cur multi"><svg><use href="#i-chrome"/></svg><em class="badge d">Đ</em></div>
    </div>
    <div class="tray">
      <svg width="18" height="12" viewBox="0 0 18 12"><path d="M2 10l7-7 7 7" fill="none" stroke="#fff" stroke-width="2"/></svg>
      <svg width="26" height="26" viewBox="0 0 26 26"><path d="M2 12A10.500 10.500 0 0 1 22 7M23 1v7h-7M2 24v-7h7M3 17a10 10 0 0 0 8 6" fill="none" stroke="#fff" stroke-width="1.800"/><circle cx="19" cy="19" r="6" fill="#f7950c"/></svg>
      <svg width="24" height="24" viewBox="0 0 24 24"><path d="M1 11L22 2l-3 18-6-4-3 3-1-5 9-8-10 7z" fill="#fff"/><circle cx="6" cy="20" r="3.500" fill="#ef3b3b"/></svg>
      <svg width="26" height="26" viewBox="0 0 26 26"><rect x="1" y="1" width="24" height="24" fill="#f3dada" stroke="#c98c8c" stroke-width="2"/><path d="M5 7l7 13 3-3 6-10" fill="none" stroke="#c22" stroke-width="3.500"/></svg>
      <span>ENG</span>
      <svg width="26" height="22" viewBox="0 0 26 22"><path d="M1 8q12-11 24 0M5 12.500q8-8 16 0M9 16.500q4-4 8 0" fill="none" stroke="#fff" stroke-width="2"/><circle cx="13" cy="19" r="2" fill="#fff"/></svg>
      <svg width="26" height="22" viewBox="0 0 26 22"><path d="M2 7.500h4L12 2v18l-6-5.500H2z" fill="none" stroke="#fff" stroke-width="1.800"/><path d="M15 8q2 3 0 6" fill="none" stroke="#fff" stroke-width="1.800"/><path d="M18 5q5 6 0 12M21.500 2.500q6 8.500 0 17" fill="none" stroke="#777" stroke-width="1.500"/></svg>
      <svg width="26" height="26" viewBox="0 0 26 26"><path d="M9 5h11a3 3 0 0 1 3 3v6M15 20H7a3 3 0 0 1-3-3v-3M23 9h2v4" fill="none" stroke="#fff" stroke-width="2"/><path d="M6 0L0 8h4l-1 6 6-8H5.500z" fill="#fff"/><path d="M8 17l11-9" stroke="#fff" stroke-width="2"/><path d="M19.500 25l-5.500-5a3 3 0 0 1 5.500-3.500A3 3 0 0 1 25 20z" fill="#fff"/></svg>
      <div class="clock"><span>16:17</span><span>03/03/2024</span></div>
      <svg width="24" height="24" viewBox="0 0 24 24"><path d="M3 18l2-3.500V9a7 7 0 0 1 14 0v5.500l2 3.500zM9.500 19a2.500 2.500 0 0 0 5 0" fill="none" stroke="#fff" stroke-width="1.800" stroke-linejoin="round"/></svg>
      <svg width="36" height="36" viewBox="0 0 36 36"><path d="M10 3a4 4 0 0 1 4-2h9l-6 20q-1 4-5 4H5q-5 0-4-6z" fill="url(#g-cop1)"/><path d="M26 32a4 4 0 0 1-4 2h-8l6-20q1-4 5-4h6q5 0 4 6z" fill="url(#g-cop2)"/><path d="M17 1h7l4 9h-8z" fill="#2a58d0"/><rect x="9" y="24" width="27" height="12" rx="2.500" fill="#fccf0a"/><text x="22.500" y="34" text-anchor="middle" class="pre">PRE</text></svg>
    </div>
  </div>
</div>
</body>
</html>
```
FILE: styles.css
```css
* { box-sizing: border-box; }
body { margin: 0; background: #222; }
h1, h2, h3, p, dl, dd, dt { margin: 0; font-weight: inherit; font-size: inherit; }
button { font: inherit; border: 0; padding: 0; background: none; color: inherit; letter-spacing: inherit; }
svg { flex: none; display: block; }
.defs { position: absolute; }
.screen { width: 2560px; height: 1600px; overflow: hidden; display: flex; flex-direction: column; font-family: "Open Sans", "Noto Sans", sans-serif; }

/* browser tab strip */
.tabstrip { height: 60px; background: #19393f; display: flex; flex: none; color: #e6ecec; font-size: 18px; letter-spacing: -.45px; }
.tabsearch { width: 41px; height: 42px; margin: 9px 7px 0 9px; border-radius: 14px; background: #255b62; display: flex; align-items: center; justify-content: center; }
.tabs { display: flex; height: 60px; align-items: flex-start; }
.tab { width: 114.200px; height: 60px; padding: 2px 0 2px 15px; display: flex; align-items: center; position: relative; }
.tab.wide { width: 115.300px; }
.tab svg { width: 24px; height: 24px; margin-right: 12px; margin-bottom: 2px; }
.tab span { width: 47px; overflow: hidden; white-space: nowrap; -webkit-mask-image: linear-gradient(90deg, #000 45%, transparent); mask-image: linear-gradient(90deg, #000 45%, transparent); }
.tab::after { content: ""; width: 3px; height: 24px; background: #255b62; margin-left: auto; }
.tab.last::after, .tab.active::after { display: none; }
.tab.active { width: 104px; margin: 9px 5px 0; height: 51px; padding: 0 0 7px 11px; background: #255b62; border-radius: 15px 15px 0 0; color: #fff; }
.tab.active span { width: 13px; }
.tab.active .x { width: 18px; height: 18px; margin: 0 0 0 12px; }
.tab.active::before { content: ""; position: absolute; left: -13px; right: -13px; bottom: 0; height: 13px; background: radial-gradient(circle at 0 0, transparent 13px, #255b62 13.5px) left / 13px 13px no-repeat, radial-gradient(circle at 100% 0, transparent 13px, #255b62 13.5px) right / 13px 13px no-repeat; }
.newtab { margin: 21px 0 0 14px; }
.wincontrols { margin-left: auto; display: flex; gap: 53px; padding: 22px 25px 0 0; }

.toolbar { height: 70px; background: #255b62; display: flex; flex: none; align-items: center; padding: 0 0 0 20px; }
.tb { width: 24px; height: 24px; margin-right: 31px; }
.tb:nth-child(3) { margin-right: 27px; }
.omnibox { width: 2118px; height: 51px; border-radius: 26px; background: #23484e; display: flex; align-items: center; padding: 0 23px 0 8px; }
.siteinfo { width: 36px; height: 36px; border-radius: 50%; background: #255b62; display: flex; align-items: center; justify-content: center; margin-right: 11px; }
.url { flex: 1; color: #fff; font-size: 20px; letter-spacing: -.05px; padding-bottom: 2px; }
.url span { color: #a3b4b5; }
.ob { width: 26px; height: 26px; margin-left: 22px; }
.tb.puzzle { width: 26px; height: 26px; margin: 0 26px 4px 27px; }
.tbsep { width: 2px; height: 24px; background: #19454b; margin-right: 27px; }
.tb.panel { margin-right: 27px; }
.avatar { width: 30px; height: 30px; border-radius: 50%; background: #5c6bc0; color: #fff; font-size: 15px; line-height: 29px; text-align: center; margin-right: 26px; }
.tb.menu { margin: 0; }

.bookmarks { height: 52px; background: #255b62; border-bottom: 2px solid #518085; display: flex; flex: none; padding: 0 0 11px 20px; align-items: center; color: #fff; font-size: 18px; letter-spacing: -.48px; }
.bookmarks a { display: flex; align-items: center; white-space: nowrap; }
.bookmarks a svg { width: 24px; height: 24px; margin-right: 9px; }
.bookmarks .bm1 svg { margin-right: 13px; }
.bm1 { width: 178px; } .bm2 { width: 230px; } .bm3 { width: 195px; } .bm4 { width: 224px; } .bm5 { width: 217px; } .bm6 { width: 138px; }
.bm7 { width: 162px; } .bm8 { width: 223px; } .bm9 { width: 221px; } .bm10 { width: 167px; } .bm11 { width: 226px; }
.bookmarks .more { width: 18px; height: 18px; margin: 0 44px 0 auto; }

/* console navigation */
.awsnav { height: 55px; flex: none; background: #252e3d; border-bottom: 1px solid #4b5260; display: flex; align-items: center; color: #fff; font-size: 16.200px; }
.awsnav b { font-weight: 600; letter-spacing: -.2px; padding-bottom: 1px; }
.logo { margin-left: 24px; }
.awsword { font: 600 22px "Open Sans", sans-serif; fill: #fff; }
.navsep { width: 1px; height: 30px; background: #414750; margin: 0 21px 0 19px; }
.awsnav .services { margin: 0 0 0 9px; width: 84px; letter-spacing: -.35px; }
.navsearch { width: 729px; height: 40px; background: #16191f; border: 1.500px solid #879596; border-radius: 3px; display: flex; align-items: center; padding: 0 13px; font-size: 18.900px; color: #95a1a4; letter-spacing: -.2px; }
.navsearch svg { color: #d5dbdb; margin-right: 13px; }
.navsearch em { flex: 1; padding-bottom: 1px; }
.navsearch span { letter-spacing: .25px; padding-bottom: 1px; }
.navright { margin-left: auto; display: grid; grid-template-columns: 68px 69px 66px 67px 141px 279px; padding-right: 0; }
.navright > div { height: 30px; display: flex; align-items: center; justify-content: center; border-left: 1px solid #414750; }
.navright > div:first-child { border: 0; }
.navright .drop { justify-content: flex-start; padding-left: 22px; gap: 6px; }
.navright .acct { letter-spacing: .15px; }

.body { height: 1250px; flex: none; display: flex; position: relative; font-size: 18.900px; letter-spacing: -.24px; }
.sidebar { width: 325px; display: flex; background: #fff; border-right: 1px solid #b9bdbf; color: #545b64; overflow: hidden; }
.sidenav { width: 299px; padding-top: 21px; }
.it { height: 40.500px; line-height: 40px; padding-left: 43.500px; }
.it.row { display: flex; align-items: center; justify-content: space-between; padding-right: 28px; }
.it.sel { color: #2f6bc0; font-weight: 700; letter-spacing: -.7px; }
.hd { height: 57.300px; padding: 14px 0 0 16px; display: flex; align-items: center; font-weight: 700; letter-spacing: -.6px; }
.hd svg { width: 17px; height: 17px; margin-right: 9px; }
.new { height: 29.500px; padding-left: 54px; }
.new span { display: block; width: 34px; font-size: 16.200px; font-weight: 600; color: #2f6bc0; line-height: 21px; border-bottom: 2px dashed #2f6bc0; }
.sbar { width: 25px; background: #f1f1f1; display: flex; flex-direction: column; align-items: center; padding: 9px 0; }
.sbar svg { width: 12px; height: 8px; }
.sbar i { width: 21px; height: 1031px; background: #c1c1c1; margin-top: 8px; }
.sbar svg:last-child { margin-top: auto; }

/* page content, dimmed by the modal overlay */
.main { width: 2235px; height: 1250px; background: #f2f3f3; color: #16191f; display: flex; flex-direction: column; overflow: hidden; position: relative; }
.overlay { position: absolute; inset: 0; background: rgba(242, 244, 243, .9); }
.lnk, .info { color: #0a4fc4; }
.ok { color: #1d8102; display: flex; align-items: center; }
.ok svg { width: 22px; height: 22px; margin-right: 5px; }
.list { background: #fafafa; height: 225px; border-bottom: 2px solid #aab7b8; position: relative; }
.titlebar { height: 51px; display: flex; align-items: center; padding: 9px 26px 0; }
h1 { font-size: 24.300px; font-weight: 700; letter-spacing: -.8px; }
h1 span { font-weight: 400; color: #687078; letter-spacing: .5px; }
.info { font-size: 16.200px; font-weight: 600; margin: 4px 0 0 10px; }
.actions { margin-left: auto; display: flex; margin-top: 5px; }
.btn { height: 37px; border: 1.500px solid #545b64; border-radius: 3px; color: #545b64; font-weight: 700; letter-spacing: -.4px; margin-right: 11px; display: flex; align-items: center; justify-content: center; }
.btn svg:not([width]) { width: 17px; height: 17px; margin-left: 12px; }
.refresh { width: 67px; } .w131 { width: 131px; } .w210 { width: 210px; } .w152 { width: 152px; margin-right: 10px; }
.launch { width: 208px; background: #f90; border: 0; color: #16191f; margin-right: 2px; }
.launchdd { width: 40px; background: #f90; border: 0; color: #16191f; margin: 0; }
.btn.launchdd svg { margin: 0; }
.filterbar { display: flex; height: 59px; padding: 13px 26px 0; }
.find, .state { height: 38px; border: 1.500px solid #687078; border-radius: 3px; display: flex; align-items: center; background: #fff; }
.find { width: 875px; padding: 0 11px; color: #687078; margin-right: 19px; }
.find svg { margin-right: 12px; }
.find em { letter-spacing: .08px; padding-bottom: 1px; }
.state { width: 175px; padding: 0 13px 0 11px; justify-content: space-between; letter-spacing: -.3px; }
.state svg { width: 17px; height: 17px; }
.pager { margin: 0 5px 0 auto; height: 28px; display: flex; align-items: center; color: #545b64; }
.pager b { color: #16191f; font-weight: 500; margin: 0 26px; }
.pager .dim { opacity: .5; }
.pager i { width: 1px; height: 34px; background: #d5dbdb; margin: 0 17px; }
.trow { display: grid; grid-template-columns: 71px 292px 270px 215px 203px 202px 176px 229px 270px 203px 104px; align-items: center; white-space: nowrap; }
.trow > div { padding-left: 22px; display: flex; align-items: center; overflow: hidden; }
.trow > .cb { padding-left: 26px; }
.check { width: 19px; height: 19px; border-radius: 3px; background: #1a6fd0; display: flex; }
.check::after { content: ""; width: 10px; height: 5px; border: solid #fff; border-width: 0 0 2.500px 2.500px; transform: rotate(-48deg); margin: 5px 0 0 5px; }
.thead { height: 45px; border-top: 1px solid #eaeded; color: #545b64; font-weight: 700; letter-spacing: -.5px; padding-bottom: 2px; }
.thead > div { height: 27px; border-right: 1px solid #545b64; }
.thead > div:first-child { border-right-color: #eaeded; }
.thead > div:last-child { border: 0; }
.sort { width: 16px; height: 16px; margin: 2px 18px 0 auto; color: #687078; }
.pen { margin-left: 5px; }
.tbody { height: 44px; border: solid #0073bb; border-width: 1.500px 0; background: #f1faff; color: #444b55; padding-bottom: 1px; }
.tbody .ok { flex: none; }
.tbody .num { letter-spacing: .2px; }
.z1, .z2 { width: 21px; height: 21px; margin-left: 16px; color: #545b64; }
.z2 { margin-left: 11px; }
.plus { margin-left: 6px; color: #545b64; }
.hscroll { display: flex; align-items: center; height: 25px; padding: 0 7px; color: #999; }
.hscroll i { width: 1299px; height: 21px; background: #c1c1c1; margin-left: 10px; }
.hscroll .r { margin-left: auto; }

.split { margin-top: 399px; height: 626px; background: #fafafa; border-top: 2px solid #d5dbdb; display: flex; flex: none; }
.splitmain { width: 2211px; }
.splithead { height: 74px; display: flex; align-items: center; padding: 0 34px 2px 27px; color: #545b64; }
h2 { flex: 1; color: #16191f; font-size: 24.300px; font-weight: 600; letter-spacing: -.1px; }
.splithead i { width: 1px; height: 34px; background: #d5dbdb; margin: 0 13px 0 11px; }
.dtabs { height: 53px; display: flex; border-bottom: 1px solid #aab7b8; color: #545b64; font-weight: 700; letter-spacing: -.42px; padding-left: 2px; }
.dtabs span { height: 52px; padding: 10px 28px 0 29px; position: relative; }
.dtabs span::after { content: ""; position: absolute; right: 0; top: 9px; height: 30px; width: 1px; background: #aab7b8; }
.dtabs .on { width: 114px; padding-left: 26px; padding-right: 0; color: #0a4fc4; border-bottom: 4px solid #545b64; }
.dtabs span:nth-child(2) { width: 254px; padding-right: 0; }
.dtabs span:nth-child(3) { width: 156px; padding-right: 0; }
.dtabs small { font-size: 16.200px; font-weight: 600; color: #0a4fc4; border-bottom: 1.500px dashed; }
.sumhead { height: 72px; padding: 15px 0 0 26px; display: flex; align-items: center; color: #545b64; }
.sumhead b { margin-left: 10px; letter-spacing: -.85px; }
.sumhead .info { margin: 1px 0 0 11px; letter-spacing: -.2px; }
.fields { display: grid; grid-template-columns: 726px 742px 1fr; }
.fields dl { height: 81px; padding: 0 0 0 27px; white-space: nowrap; }
.fields dl:nth-child(3n+2) { padding-left: 25px; border-left: 1px solid #eaeded; border-right: 1px solid #eaeded; }
.fields dl:nth-child(3n) { padding-left: 11px; }
dt { height: 30px; line-height: 30px; color: #687078; letter-spacing: -.25px; }
dt.tight { letter-spacing: -.44px; }
dd { height: 30px; line-height: 30px; display: flex; align-items: center; white-space: pre; letter-spacing: -.04px; }
dd svg { width: 21px; height: 21px; }
dd.cp > svg:first-child { margin: 0 11px 0 6px; color: #545b64; }
dd .ext { margin-left: 5px; color: #0a4fc4; }
dd.opt { letter-spacing: -.28px; }
dd.opt > svg:first-child { margin-right: 6px; }
dd u { text-decoration: none; color: #16191f; }
.sbar.small { width: 24px; background: none; padding: 11px 1px 7px 0; }
.sbar.small i { height: 164px; margin-top: 6px; }

/* terminate dialog */
.modal { position: absolute; left: 889px; top: 394px; width: 1108px; height: 464px; background: #fff; box-shadow: 0 0 2px rgba(0, 28, 36, .5), 0 2px 1px rgba(0, 28, 36, .45); color: #16191f; display: flex; flex-direction: column; }
.mhead { height: 65px; background: #fafafa; border-bottom: 1.500px solid #eaeded; display: flex; align-items: center; justify-content: space-between; padding: 0 29px 2px 27px; }
.mhead svg { color: #545b64; margin-top: 2px; }
h3 { font-size: 24.300px; font-weight: 600; letter-spacing: -.55px; }
.mbody { padding: 16px 28px 0 27px; flex: 1; white-space: nowrap; line-height: 30px; }
.alert { height: 92px; background: #fffce9; border: 1.500px solid #8d6605; border-radius: 2px; padding: 14px 27px; display: flex; gap: 11px; }
.alert svg { color: #8d6605; margin-top: 5px; }
.alert p { letter-spacing: -.2px; }
.ask { padding-top: 9px; letter-spacing: -.3px; }
.mtable { margin: 18px 0 8px; height: 84px; box-shadow: 0 0 2px rgba(0, 28, 36, .45), 0 2px 1px rgba(0, 28, 36, .4); }
.mth { height: 41px; background: #fafafa; border-bottom: 1.500px solid #eaeded; display: grid; grid-template-columns: 525px 1fr; align-items: center; color: #545b64; letter-spacing: -.6px; padding-bottom: 2px; }
.mth b { padding-left: 27px; line-height: 27px; }
.mth b + b { padding-left: 22px; border-left: 1px solid #545b64; }
.mtr { height: 43px; display: grid; grid-template-columns: 548px 1fr; align-items: center; padding-bottom: 2px; }
.mtr span { display: flex; align-items: center; }
.mtr span:first-child { padding-left: 32px; }
.mtr span svg { color: #545b64; width: 21px; height: 21px; margin-right: 11px; }
.mtr .ok svg { color: #1d8102; width: 22px; height: 22px; margin-right: 5px; }
.mtr a { color: #2f6bc0; letter-spacing: .05px; }
.confirm { letter-spacing: -.25px; }
.mfoot { height: 59px; border-top: 1.500px solid #eaeded; display: flex; align-items: center; justify-content: flex-end; padding: 0 28px 1px 0; }
.mfoot b { color: #545b64; margin-right: 38px; letter-spacing: -.4px; padding-bottom: 1px; }
.mfoot button { width: 150px; height: 37px; background: #f29913; border-radius: 3px; font-weight: 700; letter-spacing: -.35px; padding-bottom: 2px; }
.redbox { position: absolute; left: 905px; top: 403px; width: 203px; height: 71px; border: 10px solid #d02526; }

.awsfoot { height: 43px; flex: none; background: #252e3d; border-top: 1px solid #4b5260; border-bottom: 2px solid #4b4847; display: flex; align-items: center; padding: 0 20px 0 21px; color: #fff; font-size: 16.200px; letter-spacing: -.4px; white-space: nowrap; }
.awsfoot b { font-weight: 600; }
.cs { width: 113px; margin-left: 6px; }
.grow { flex: 1; }
.cpy { margin-right: 40px; } .prv { margin-right: 35px; } .trm { margin-right: 34px; }
.ck { letter-spacing: -.6px; }

/* desktop taskbar */
.taskbar { height: 70px; flex: none; background: linear-gradient(90deg, #252424, #262422 50%, #2b2420 75%, #2c2422); display: flex; align-items: center; color: #f2f2f2; font-size: 18px; letter-spacing: -.35px; position: relative; }
.weather { display: flex; padding-left: 28px; width: 732px; gap: 1px; }
.weather div { display: flex; flex-direction: column; line-height: 24px; margin-top: -3px; }
.weather svg { margin-top: -2px; }
.weather .sub { color: #c8c8c8; letter-spacing: -.25px; }
.bdg { font: 17px "Open Sans", sans-serif; fill: #222; }
.tsearch { width: 330px; height: 48px; border-radius: 24px; background: #434240; border: 1.500px solid #5b5a58; margin: 0 0 2px 19px; display: flex; align-items: center; padding: 0 3px 0 14px; color: #e2e2e2; font-size: 20px; }
.tsearch span { margin: 0 auto 0 15px; letter-spacing: -.2px; padding-bottom: 1px; }
.apps { display: flex; padding-left: 3px; }
.app { width: 66px; height: 62px; display: flex; align-items: center; justify-content: center; position: relative; }
.app svg { width: 36px; height: 36px; z-index: 1; margin-bottom: 2px; }
.app.hot::before, .app.cur::before { content: ""; position: absolute; inset: 1px 3px; border-radius: 6px; background: #43262a; }
.app.multi::before { right: 9px; box-shadow: 1px 0 0 #262322, 6px 0 0 #43262a; }
.app.cur::before { background: #393532; box-shadow: 1px 0 0 #262322, 6px 0 0 #393532; }
.app.run::after, .app.cur::after { content: ""; position: absolute; bottom: 1px; left: 29px; width: 9px; height: 5px; border-radius: 3px; background: #9b9795; z-index: 1; }
.app.hot::after { background: #ff929c; }
.app.cur::after { left: 21px; width: 24px; background: #f47f68; }
.badge { position: absolute; left: 35px; top: 5px; width: 24px; height: 24px; border-radius: 50%; background: #f4775c; color: #222; font-style: normal; font-size: 17px; line-height: 24px; text-align: center; z-index: 2; }
.badge.d { background: #5866b8; color: #dfe3ff; font-size: 15px; }
.key { font: bold 13px "Liberation Sans", sans-serif; fill: #e02b2b; text-anchor: middle; }
.tray { margin-left: auto; display: flex; align-items: center; padding-right: 29px; }
.tray > svg { margin-bottom: 2px; }
.tray > svg:nth-child(1) { margin-right: 27px; }
.tray > svg:nth-child(2) { margin-right: 24px; }
.tray > svg:nth-child(3) { margin-right: 22px; }
.tray > svg:nth-child(4) { margin-right: 26px; }
.tray > span { width: 36px; margin: 0 25px 3px 0; letter-spacing: -.6px; }
.tray > svg:nth-child(6) { margin-right: 10px; }
.tray > svg:nth-child(7) { margin-right: 11px; }
.clock { width: 116px; display: flex; flex-direction: column; text-align: right; line-height: 24px; margin: -3px 12px 0 0; letter-spacing: -.25px; }
.tray > svg:nth-child(10) { margin-right: 25px; }
.pre { font: bold 10px "Open Sans", sans-serif; fill: #222; }
```
